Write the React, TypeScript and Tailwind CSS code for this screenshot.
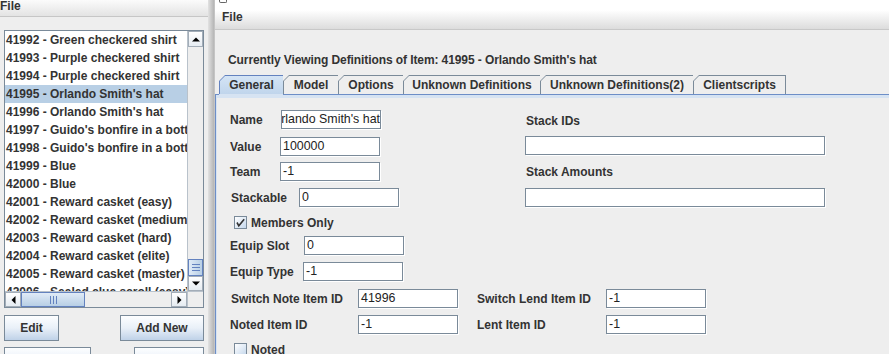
import React from "react";

const items = [
  "41992 - Green checkered shirt",
  "41993 - Purple checkered shirt",
  "41994 - Purple checkered shirt",
  "41995 - Orlando Smith's hat",
  "41996 - Orlando Smith's hat",
  "41997 - Guido's bonfire in a bottle",
  "41998 - Guido's bonfire in a bottle",
  "41999 - Blue",
  "42000 - Blue",
  "42001 - Reward casket (easy)",
  "42002 - Reward casket (medium)",
  "42003 - Reward casket (hard)",
  "42004 - Reward casket (elite)",
  "42005 - Reward casket (master)",
  "42006 - Sealed clue scroll (easy)",
];

function Arrow({ dir }: { dir: "up" | "down" | "left" | "right" }) {
  if (dir === "up")
    return (
      <svg width="8" height="5" viewBox="0 0 8 5">
        <polygon points="0,4.5 8,4.5 4,0.5" fill="#000" />
      </svg>
    );
  if (dir === "down")
    return (
      <svg width="8" height="5" viewBox="0 0 8 5">
        <polygon points="0,0.5 8,0.5 4,4.5" fill="#000" />
      </svg>
    );
  if (dir === "left")
    return (
      <svg width="5" height="8" viewBox="0 0 5 8">
        <polygon points="4.5,0 4.5,8 0.5,4" fill="#000" />
      </svg>
    );
  return (
    <svg width="5" height="8" viewBox="0 0 5 8">
      <polygon points="0.5,0 0.5,8 4.5,4" fill="#000" />
    </svg>
  );
}

function ScrollBtn({ className, dir }: { className: string; dir: "up" | "down" | "left" | "right" }) {
  return (
    <div
      className={`shrink-0 flex items-center justify-center border border-[#a3adb8] bg-gradient-to-b from-white to-[#e6ecf2] ${className}`}
    >
      <Arrow dir={dir} />
    </div>
  );
}

function VScroll() {
  return (
    <div className="w-[16px] shrink-0 flex flex-col bg-[#eeeeee] border-l border-[#b9c2cb]">
      <ScrollBtn className="h-[16px]" dir="up" />
      <div className="flex-1 flex flex-col justify-end">
        <div className="h-[17px] border border-[#6382bf] bg-gradient-to-r from-[#e0ebf7] to-[#b8cfe5] flex flex-col items-center justify-center gap-[2px]">
          <div className="w-[8px] h-px bg-[#6382bf]" />
          <div className="w-[8px] h-px bg-[#6382bf]" />
          <div className="w-[8px] h-px bg-[#6382bf]" />
        </div>
      </div>
      <ScrollBtn className="h-[15px]" dir="down" />
    </div>
  );
}

function HScroll() {
  return (
    <div className="h-[16px] shrink-0 flex bg-[#eeeeee] border-t border-[#b9c2cb]">
      <ScrollBtn className="w-[16px]" dir="left" />
      <div className="w-[64px] border border-[#6382bf] bg-gradient-to-b from-[#e0ebf7] to-[#b8cfe5] flex items-center justify-center gap-[2px]">
        <div className="h-[8px] w-px bg-[#6382bf]" />
        <div className="h-[8px] w-px bg-[#6382bf]" />
        <div className="h-[8px] w-px bg-[#6382bf]" />
      </div>
      <div className="flex-1" />
      <ScrollBtn className="w-[16px]" dir="right" />
      <div className="w-[16px] border-l border-[#b9c2cb] bg-[#eeeeee]" />
    </div>
  );
}

function Btn({ className, children }: { className: string; children?: React.ReactNode }) {
  return (
    <div
      className={`h-[26px] border border-[#7a8a99] bg-gradient-to-b from-[#fdfeff] via-[#e9f0f8] to-[#bfd2e8] flex items-center justify-center font-bold ${className}`}
    >
      {children}
    </div>
  );
}

function LeftWindow() {
  return (
    <div className="w-[208px] shrink-0 flex flex-col">
      <div className="h-[17px] shrink-0 border-b border-[#c6c6c6] bg-gradient-to-b from-[#fbfbfb] to-[#e3e3e3] font-bold leading-[12px]">
        File
      </div>
      <div className="mt-[13px] ml-[4px] w-[200px] h-[278px] shrink-0 border border-[#7a8a99] flex flex-col bg-white">
        <div className="flex h-[260px] shrink-0">
          <div className="flex-1 min-w-0 overflow-hidden">
            {items.map((t, i) => (
              <div
                key={i}
                className={`h-[18px] leading-[18px] pl-px whitespace-nowrap font-bold ${
                  i === 3 ? "bg-[#b8cfe5]" : ""
                }`}
              >
                {t}
              </div>
            ))}
          </div>
          <VScroll />
        </div>
        <HScroll />
      </div>
      <div className="mt-[7px] ml-[4px] w-[200px] flex justify-between shrink-0">
        <Btn className="w-[55px]">Edit</Btn>
        <Btn className="w-[84px]">Add New</Btn>
      </div>
      <div className="mt-[6px] ml-[4px] w-[200px] flex justify-between shrink-0">
        <Btn className="w-[87px]" />
        <Btn className="w-[70px]" />
      </div>
    </div>
  );
}

function Tab({
  label,
  className,
  selected,
  last,
}: {
  label: string;
  className: string;
  selected?: boolean;
  last?: boolean;
}) {
  return (
    <div
      className={`h-[19px] shrink-0 pt-px pl-px ${last ? "pr-px" : ""} ${
        selected ? "bg-[#6382bf]" : "bg-[#7a8a99]"
      } [clip-path:polygon(6px_0,100%_0,100%_100%,0_100%,0_6px)] ${className}`}
    >
      <div
        className={`h-full flex items-center justify-center font-bold whitespace-nowrap [clip-path:polygon(5px_0,100%_0,100%_100%,0_100%,0_5px)] ${
          selected ? "bg-gradient-to-b from-[#d4e4f5] to-[#c0d5ec]" : "bg-[#eeeeee]"
        }`}
      >
        {label}
      </div>
    </div>
  );
}

function Input({
  className,
  children,
  right,
}: {
  className: string;
  children?: React.ReactNode;
  right?: boolean;
}) {
  return (
    <div
      className={`h-[19px] shrink-0 bg-white border border-[#7a8a99] shadow-[1px_1px_0_#ffffff] flex items-center overflow-hidden whitespace-nowrap font-normal text-[12.4px] text-[#222222] ${
        right ? "justify-end pr-0" : "pl-[2px]"
      } ${className}`}
    >
      {children}
    </div>
  );
}

function Check({ checked }: { checked?: boolean }) {
  return (
    <div className="w-[13px] h-[13px] shrink-0 border border-[#7a8a99] bg-gradient-to-br from-white to-[#c6d8ec] flex items-center justify-center">
      {checked && (
        <svg width="11" height="11" viewBox="0 0 11 11">
          <polyline points="2,5.5 3.8,8.8 9.2,2.2" fill="none" stroke="#333333" strokeWidth="1.6" />
        </svg>
      )}
    </div>
  );
}

function RightWindow() {
  return (
    <div className="flex-1 min-w-0 flex flex-col border-l border-[#c4c4c4]">
      <div className="h-[30px] shrink-0 border-b border-[#c8c8c8] bg-gradient-to-b from-white from-[35%] to-[#dcdcdc] pl-[4px]">
        <div className="w-[8px] h-[3px] border-x border-b border-[#666666] rounded-b-[2px]" />
        <div className="mt-[7px] pl-[3px] font-bold leading-[14px]">File</div>
      </div>
      <div className="mt-[23px] pl-[13px] font-bold leading-[14px] whitespace-nowrap tracking-[-0.09px]">
        Currently Viewing Definitions of Item: 41995 - Orlando Smith's hat
      </div>
      <div className="mt-[8px] pl-[4px] flex h-[19px] shrink-0">
        <Tab label="General" className="w-[64px]" selected />
        <Tab label="Model" className="w-[55px]" />
        <Tab label="Options" className="w-[65px]" />
        <Tab label="Unknown Definitions" className="w-[137px]" />
        <Tab label="Unknown Definitions(2)" className="w-[153px]" />
        <Tab label="Clientscripts" className="w-[93px]" last />
      </div>
      <div className="flex h-px shrink-0">
        <div className="w-[4px] bg-[#6d8ec7]" />
        <div className="w-[64px] bg-[#d6e3f2]" />
        <div className="flex-1 bg-[#6d8ec7]" />
      </div>
      <div className="flex-1 border-l border-[#6d8ec7]">
        <div className="h-full border-t-[3px] border-l border-[#d6e3f2]">
          <div className="flex">
            <div className="w-[308px] shrink-0 flex flex-col">
              <div className="mt-[12px] h-[19px] flex items-center">
                <span className="ml-[13px] w-[51px] shrink-0 font-bold">Name</span>
                <Input className="w-[100px]" right>
                  Orlando Smith's hat
                </Input>
              </div>
              <div className="mt-[8px] h-[19px] flex items-center">
                <span className="ml-[13px] w-[50px] shrink-0 font-bold">Value</span>
                <Input className="w-[100px]">100000</Input>
              </div>
              <div className="mt-[6px] h-[19px] flex items-center">
                <span className="ml-[13px] w-[50px] shrink-0 font-bold">Team</span>
                <Input className="w-[100px]">-1</Input>
              </div>
              <div className="mt-[7px] h-[19px] flex items-center">
                <span className="ml-[14px] w-[68px] shrink-0 font-bold">Stackable</span>
                <Input className="w-[100px]">0</Input>
              </div>
              <div className="mt-[9px] h-[13px] flex items-center">
                <span className="ml-[17px]">
                  <Check checked />
                </span>
                <span className="ml-[4px] font-bold">Members Only</span>
              </div>
              <div className="mt-[7px] h-[19px] flex items-center">
                <span className="ml-[13px] w-[74px] shrink-0 font-bold">Equip Slot</span>
                <Input className="w-[100px]">0</Input>
              </div>
              <div className="mt-[7px] h-[19px] flex items-center">
                <span className="ml-[13px] w-[73px] shrink-0 font-bold">Equip Type</span>
                <Input className="w-[100px]">-1</Input>
              </div>
            </div>
            <div className="flex flex-col">
              <div className="mt-[16px] pl-px font-bold leading-[14px]">Stack IDs</div>
              <Input className="mt-[8px] w-[300px]" />
              <div className="mt-[10px] pl-px font-bold leading-[14px]">Stack Amounts</div>
              <Input className="mt-[9px] w-[300px]" />
            </div>
          </div>
          <div className="mt-[8px] h-[19px] flex items-center">
            <span className="ml-[14px] w-[127px] shrink-0 font-bold">Switch Note Item ID</span>
            <Input className="w-[100px]">41996</Input>
            <span className="ml-[19px] w-[129px] shrink-0 font-bold">Switch Lend Item ID</span>
            <Input className="w-[100px]">-1</Input>
          </div>
          <div className="mt-[7px] h-[19px] flex items-center">
            <span className="ml-[13px] w-[128px] shrink-0 font-bold">Noted Item ID</span>
            <Input className="w-[100px]">-1</Input>
            <span className="ml-[19px] w-[129px] shrink-0 font-bold">Lent Item ID</span>
            <Input className="w-[100px]">-1</Input>
          </div>
          <div className="mt-[9px] h-[13px] flex items-center">
            <span className="ml-[17px]">
              <Check />
            </span>
            <span className="ml-[4px] font-bold">Noted</span>
          </div>
        </div>
      </div>
    </div>
  );
}

export default function App() {
  return (
    <div className="w-[889px] h-[354px] overflow-hidden flex bg-[#eeeeee] text-[#333333] text-[12px] font-['Liberation_Sans',Arial,sans-serif]">
      <LeftWindow />
      <div className="w-[6px] shrink-0 bg-gradient-to-r from-[#e2e2e2] to-[#b5b5b5]" />
      <RightWindow />
    </div>
  );
}
